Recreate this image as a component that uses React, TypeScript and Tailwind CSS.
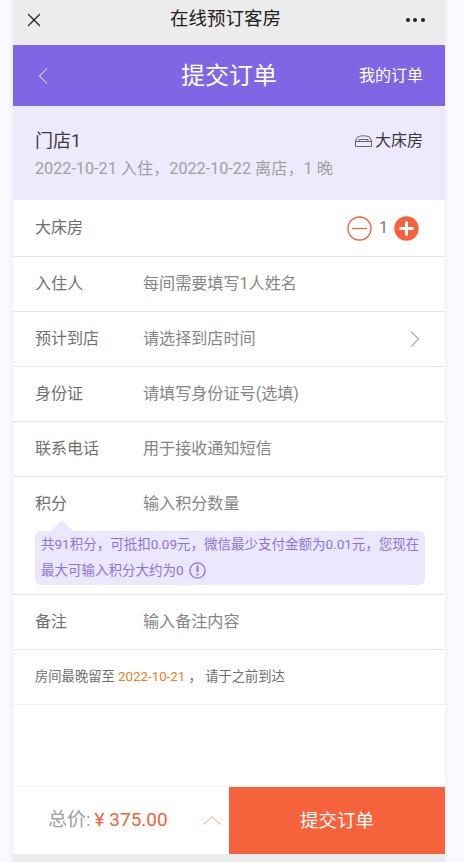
import { X } from "lucide-react";
import React from "react";

const FONT = "font-['Roboto','Noto_Sans_CJK_SC',sans-serif]";

function BedIcon() {
  return (
    <svg width="17" height="12" viewBox="0 0 17 12" fill="none" stroke="#444" strokeWidth="0.8" className="mr-[3px]">
      <path d="M0.5 11.5V6L2.5 2C5.5 0.4 11.5 0.4 14.5 2L16.5 6V11.5H0.5Z" />
      <path d="M0.5 6.5H16.5M4 6.5V4.5H13V6.5" />
    </svg>
  );
}

function Chevron({ d, color, width, height }: { d: string; color: string; width: number; height: number }) {
  return (
    <svg width={width} height={height} viewBox={`0 0 ${width} ${height}`} fill="none" stroke={color} strokeWidth="1">
      <path d={d} />
    </svg>
  );
}

function FormRow({ label, value, right, tall }: { label: string; value?: string; right?: React.ReactNode; tall?: boolean }) {
  return (
    <div
      className={`flex ${tall ? "h-[57px]" : "h-[55px]"} items-center justify-between border-b border-[#e8e8e8] pl-[22px] pr-[26px] text-base text-[#6f6f6f]`}
    >
      <div className="flex items-center">
        <span className="w-[108px]">{label}</span>
        {value && <span className="text-[16.1px] text-[#858585]">{value}</span>}
      </div>
      {right}
    </div>
  );
}

function Counter() {
  return (
    <div className="flex items-center">
      <svg width="25" height="25" viewBox="0 0 25 25" fill="none" stroke="#f6623b">
        <circle cx="12.5" cy="12.5" r="11.5" strokeWidth="1.4" />
        <path d="M5 12.5H20" strokeWidth="1.2" />
      </svg>
      <span className="w-[22px] pl-[1px] text-center text-base text-[#777]">1</span>
      <svg width="25" height="25" viewBox="0 0 25 25" fill="none">
        <circle cx="12.5" cy="12.5" r="12.2" fill="#f6623b" />
        <path d="M12.5 5.5V19.5M5.5 12.5H19.5" stroke="#fff" strokeWidth="3" />
      </svg>
    </div>
  );
}

function PointsRow() {
  return (
    <div className="border-b border-[#e8e8e8] pb-[9px] pl-[22px] pr-[20px]">
      <div className="flex h-[54px] items-center text-base text-[#6f6f6f]">
        <span className="w-[108px]">积分</span>
        <span className="text-[16.1px] text-[#858585]">输入积分数量</span>
      </div>
      <div className="relative h-[54px] rounded-[6px] bg-[#ebe8fd] px-[6px] text-[13.5px] leading-[26px] text-[#8d72e4]">
        <div className="absolute -top-[11px] left-[16px] h-0 w-0 border-x-[11px] border-b-[11px] border-x-transparent border-b-[#ebe8fd]" />
        <p className="whitespace-nowrap">共91积分，可抵扣0.09元，微信最少支付金额为0.01元，您现在</p>
        <p className="flex items-center">
          最大可输入积分大约为0
          <svg width="17" height="17" viewBox="0 0 17 17" fill="none" stroke="#8d72e4" className="ml-[5px]">
            <circle cx="8.5" cy="8.5" r="7.6" strokeWidth="1.4" />
            <path d="M8.5 3.5V10M8.5 11.5V13.5" strokeWidth="2" />
          </svg>
        </p>
      </div>
    </div>
  );
}

export default function App() {
  return (
    <div className={`${FONT} flex h-[862px] w-[464px] overflow-hidden bg-[#f9faff] pl-[13px]`}>
      <div className="flex w-[432px] flex-col bg-white shadow-[0_0_6px_rgba(0,0,0,0.08)]">
        <header className="flex h-[45px] shrink-0 items-center justify-between bg-[#ececec] pb-[6px] pl-[10px] pr-[20px] text-[#222]">
          <X size={22} strokeWidth={1.4} />
          <span className="text-[18.5px]">在线预订客房</span>
          <div className="flex gap-[3.5px]">
            <i className="h-[4px] w-[4px] rounded-full bg-[#222]" />
            <i className="h-[4px] w-[4px] rounded-full bg-[#222]" />
            <i className="h-[4px] w-[4px] rounded-full bg-[#222]" />
          </div>
        </header>

        <div className="relative flex h-[61px] shrink-0 items-center justify-between bg-[#7f66e5] pl-[25px] pr-[22px] text-white">
          <Chevron width={10} height={16} color="#fff" d="M9 0.5L1.5 8L9 15.5" />
          <span className="absolute left-0 right-0 text-center text-2xl">提交订单</span>
          <span className="text-base">我的订单</span>
        </div>

        <div className="h-[94px] shrink-0 bg-[#eeeafd] px-[22px] pt-[22px]">
          <div className="flex items-center justify-between">
            <span className="text-lg leading-[26px] text-[#3a3a3a]">门店1</span>
            <span className="flex items-center text-base leading-[24px] text-[#3a3a3a]">
              <BedIcon />
              大床房
            </span>
          </div>
          <p className="mt-[4px] text-[16.2px] leading-[22px] text-[#a0a0a0]">2022-10-21 入住，2022-10-22 离店，1 晚</p>
        </div>

        <FormRow tall label="大床房" right={<Counter />} />
        <FormRow label="入住人" value="每间需要填写1人姓名" />
        <FormRow
          label="预计到店"
          value="请选择到店时间"
          right={<Chevron width={9} height={16} color="#777" d="M1 0.5L8.5 8L1 15.5" />}
        />
        <FormRow label="身份证" value="请填写身份证号(选填)" />
        <FormRow label="联系电话" value="用于接收通知短信" />
        <PointsRow />
        <FormRow label="备注" value="输入备注内容" />
        <div className="flex h-[55px] items-center border-b border-[#f0f0f0] px-[22px] text-[13.3px] text-[#6f6f6f]">
          房间最晚留至&nbsp;<span className="text-[#f47b20]">2022-10-21</span>&nbsp;，&nbsp;请于之前到达
        </div>

        <div className="flex-1" />

        <footer className="flex h-[68px] shrink-0 border-t border-[#f5f5f5]">
          <div className="flex flex-1 items-center pl-[35px] pr-[8px] text-[19px] text-[#a0a0a0]">
            <span>总价:</span>
            <span className="ml-[4px] text-[#f6623b]">¥ 375.00</span>
            <span className="ml-auto flex">
              <Chevron width={18} height={9} color="#f0a08c" d="M0.5 8.5L9 0.7L17.5 8.5" />
            </span>
          </div>
          <button className="w-[216px] bg-[#f6623b] pt-[3px] text-[18.5px] text-white">提交订单</button>
        </footer>
        <div className="h-[8px] shrink-0 bg-[#ececec]" />
      </div>
    </div>
  );
}
